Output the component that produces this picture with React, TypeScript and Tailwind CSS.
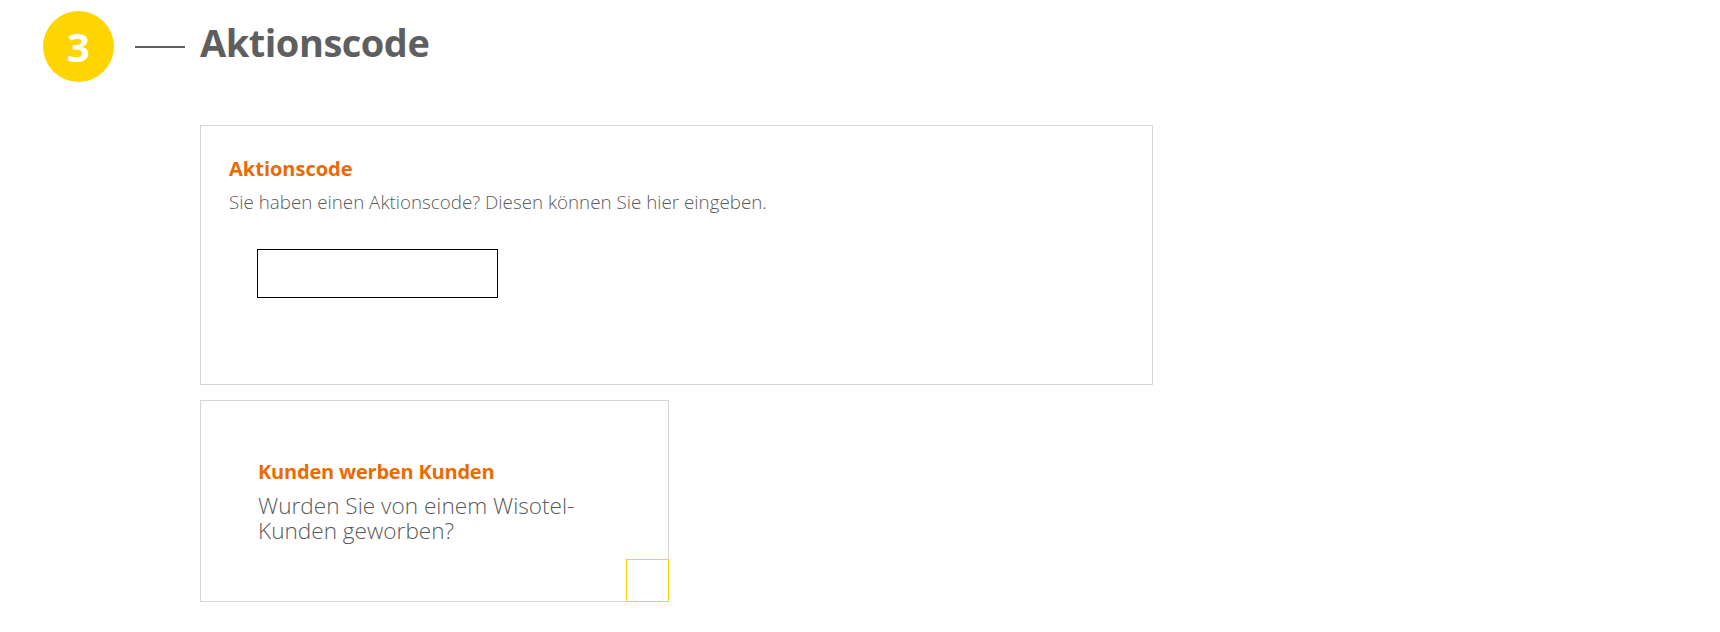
export default function App() {
  return (
    <div className="min-h-[632px] bg-white font-['Open_Sans',sans-serif] text-[#5f5f5f]">
      <div className="flex items-center pl-[43px] pt-[11px]">
        <div className="flex h-[71px] w-[71px] items-center justify-center rounded-full bg-[#ffd500] text-[40px] font-bold leading-none text-white">
          3
        </div>
        <div className="ml-[21px] h-[2px] w-[50px] bg-[#5f5f5f]" />
        <h1 className="mb-[8px] ml-[15px] text-[38px] font-bold leading-[57px] tracking-[-0.5px] text-[#5f5f5f]">
          Aktionscode
        </h1>
      </div>

      <div className="ml-[200px] mt-[43px] flex flex-col gap-[15px]">
        <div className="h-[260px] w-[953px] border border-[#d6d6d6] pl-[28px] pt-[29px]">
          <h2 className="text-[20px] font-bold leading-[28px] text-[#ec6a00]">Aktionscode</h2>
          <p className="mt-[7px] text-[18.8px] font-light leading-[24px] text-[#5a5a5a]">
            Sie haben einen Aktionscode? Diesen können Sie hier eingeben.
          </p>
          <input
            type="text"
            className="ml-[28px] mt-[35px] block h-[49px] w-[241px] border-[1.5px] border-black bg-white px-2 outline-none"
          />
        </div>

        <div className="relative h-[202px] w-[469px] border border-[#d6d6d6] pl-[57px] pt-[57px]">
          <h2 className="text-[20px] font-bold leading-[28px] tracking-[-0.2px] text-[#ec6a00]">
            Kunden werben Kunden
          </h2>
          <p className="mt-[7px] w-[340px] text-[22.6px] font-light leading-[25px] text-[#5a5a5a]">
            Wurden Sie von einem Wisotel-Kunden geworben?
          </p>
          <div className="absolute bottom-[-1px] right-[-1px] h-[43px] w-[43px] border-[1.5px] border-[#ffd500]" />
        </div>
      </div>
    </div>
  );
}
